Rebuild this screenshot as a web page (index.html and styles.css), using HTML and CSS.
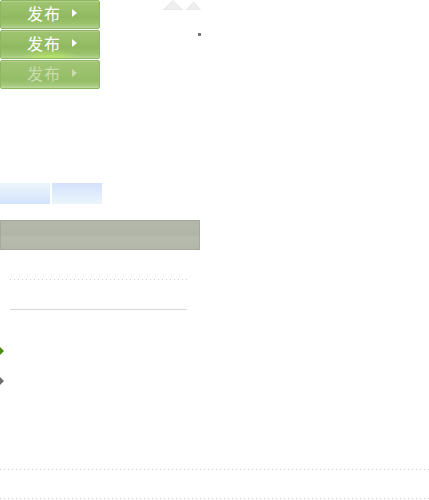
FILE: index.html
```html
<!DOCTYPE html>
<html>
<head>
<meta charset="utf-8">
<link rel="stylesheet" href="styles.css">
</head>
<body>
<div class="sheet">
  <div class="top">
    <div class="buttons">
      <div class="btn"><span class="label">发布</span><span class="tri"></span></div>
      <div class="btn hover"><span class="label">发布</span><span class="tri"></span></div>
      <div class="btn disabled"><span class="label">发布</span><span class="tri"></span></div>
    </div>
    <div class="carets">
      <svg class="caret-big" width="20" height="10" viewBox="0 0 20 10"><polygon points="0.5,10 10,0.5 19.5,10" fill="#efefef" stroke="#e2e2e2" stroke-width="1"/></svg>
      <svg class="caret-small" width="15" height="10" viewBox="0 0 15 10"><polygon points="0.5,10 7.5,2 14.5,10" fill="#efefef" stroke="#e2e2e2" stroke-width="1"/></svg>
    </div>
    <div class="dot-col"><span class="dot"></span></div>
  </div>

  <div class="tabs">
    <div class="tab tab-a"></div>
    <div class="tab tab-b"></div>
  </div>

  <div class="graybar"></div>

  <div class="rule dotted"></div>
  <div class="rule solid"></div>

  <div class="arrow green"></div>
  <div class="arrow gray"></div>

  <div class="wide dotted-wide first"></div>
  <div class="wide dotted-wide second"></div>
</div>
</body>
</html>
```
FILE: styles.css
```css
html, body {
  margin: 0;
  padding: 0;
  background: #ffffff;
}
.sheet {
  width: 429px;
  height: 500px;
  overflow: hidden;
  font-family: "Noto Sans CJK SC", "Noto Sans", sans-serif;
}
.top {
  display: flex;
  align-items: flex-start;
  height: 90px;
}
.buttons {
  display: flex;
  flex-direction: column;
  gap: 1px;
  width: 100px;
}
.btn {
  position: relative;
  box-sizing: border-box;
  height: 29px;
  width: 100px;
  border: 1px solid #8db761;
  border-radius: 2px;
  background: linear-gradient(#a0c472 0%, #95bd66 45%, #8fb85f 60%, #9bc36c 85%, #b6d495 100%);
  box-shadow: inset 0 1px 0 rgba(255,255,255,0.2);
  display: flex;
  align-items: center;
  padding-left: 26px;
  padding-bottom: 3px;
}
.btn.hover {
  background:
    radial-gradient(ellipse 30px 8px at 50% 100%, rgba(185,235,95,0.85), rgba(185,235,95,0) 100%),
    linear-gradient(#a0c472 0%, #95bd66 45%, #8fb85f 60%, #9bc36c 85%, #b6d495 100%);
}
.btn.disabled {
  background: linear-gradient(#a1c575 0%, #99c06b 50%, #94bc66 70%, #a4c97d 90%, #c0da9f 100%);
}
.label {
  color: #ffffff;
  font-size: 16px;
  line-height: 16px;
  letter-spacing: 1px;
}
.btn.disabled .label {
  color: #c8dcae;
}
.tri {
  width: 0;
  height: 0;
  margin-left: 11px;
  border-top: 4px solid transparent;
  border-bottom: 4px solid transparent;
  border-left: 5px solid #ffffff;
}
.btn.disabled .tri {
  border-left-color: #c8dcae;
}
.carets {
  display: flex;
  gap: 3px;
  margin-left: 63px;
}
.caret-big, .caret-small {
  display: block;
}
.dot-col {
  padding-top: 33px;
  margin-left: -3px;
}
.dot {
  display: block;
  width: 3px;
  height: 3px;
  background: #777777;
}
.tabs {
  display: flex;
  gap: 2px;
  margin-top: 93px;
  height: 21px;
}
.tab {
  width: 50px;
  height: 21px;
}
.tab-a {
  background: linear-gradient(#ecf6fa, #d3e2fd);
}
.tab-b {
  background: linear-gradient(#d3e1fd, #ebf6fa);
}
.graybar {
  box-sizing: border-box;
  margin-top: 16px;
  width: 200px;
  height: 30px;
  border: 1px solid #a4a99d;
  background: linear-gradient(#b3b8ab 0%, #b0b5a8 50%, #b6bbae 56%, #b2b7aa 100%);
}
.rule {
  margin-left: 10px;
  width: 177px;
  height: 1px;
}
.dotted {
  margin-top: 29px;
  background-image: linear-gradient(to right, #cfcfcf 1px, transparent 1px);
  background-size: 4px 1px;
}
.solid {
  margin-top: 29px;
  background: #d8d8d8;
}
.arrow {
  width: 0;
  height: 0;
  border-top: 4px solid transparent;
  border-bottom: 4px solid transparent;
  border-left: 4px solid #4c8a14;
}
.arrow.green {
  margin-top: 37px;
}
.arrow.gray {
  margin-top: 22px;
  border-left-color: #6f6f6f;
}
.wide {
  width: 429px;
  height: 1px;
  background-image: linear-gradient(to right, #cccccc 1px, transparent 1px);
  background-size: 4px 1px;
}
.wide.first {
  margin-top: 84px;
}
.wide.second {
  margin-top: 28px;
}
```
